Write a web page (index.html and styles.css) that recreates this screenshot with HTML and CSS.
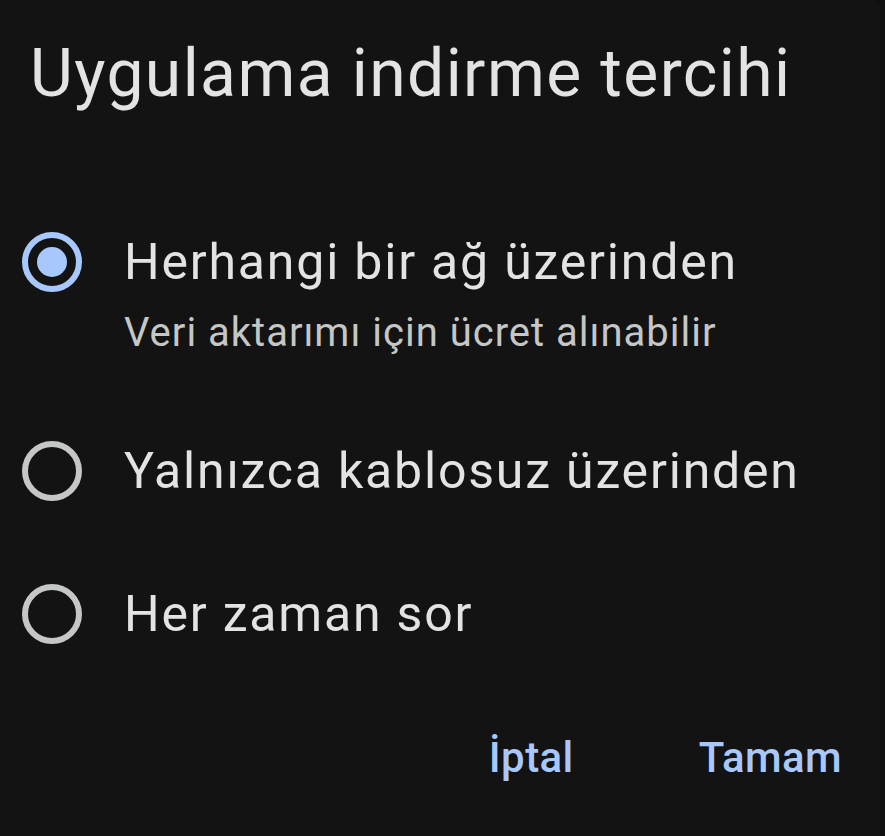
FILE: index.html
```html
<!DOCTYPE html>
<html lang="tr">
<head>
<meta charset="utf-8">
<link rel="stylesheet" href="styles.css">
</head>
<body>
<div class="dialog">
  <h1 class="title">Uygulama indirme tercihi</h1>
  <div class="options">
    <div class="option">
      <span class="radio selected"><span class="dot"></span></span>
      <div class="label">
        <div class="main">Herhangi bir ağ üzerinden</div>
        <div class="sub">Veri aktarımı için ücret alınabilir</div>
      </div>
    </div>
    <div class="option">
      <span class="radio"></span>
      <div class="label"><div class="main">Yalnızca kablosuz üzerinden</div></div>
    </div>
    <div class="option">
      <span class="radio"></span>
      <div class="label"><div class="main">Her zaman sor</div></div>
    </div>
  </div>
  <div class="actions">
    <span class="btn">İptal</span>
    <span class="btn">Tamam</span>
  </div>
</div>
</body>
</html>
```
FILE: styles.css
```css
html, body {
  margin: 0;
  padding: 0;
  background: #0f0f0f;
  height: 100%;
}
body {
  font-family: Roboto, "Noto Sans", sans-serif;
  color: #e3e3e3;
}
.dialog {
  width: 880px;
  height: 836px;
  box-sizing: border-box;
  background: #131313;
  border-top-right-radius: 8px;
  padding: 34px 0 0 0;
}
.title {
  margin: 0 0 0 30px;
  font-size: 66px;
  font-weight: 400;
  line-height: 80px;
  letter-spacing: 1.4px;
  color: #e3e3e3;
}
.options {
  margin-top: 118px;
  padding-left: 22px;
  display: flex;
  flex-direction: column;
  gap: 83px;
}
.option {
  display: flex;
  align-items: flex-start;
  gap: 42px;
}
.radio {
  width: 60px;
  height: 60px;
  box-sizing: border-box;
  border-radius: 50%;
  border: 6px solid #c4c7c5;
  display: flex;
  align-items: center;
  justify-content: center;
  flex: none;
}
.radio.selected {
  border-color: #a8c7fa;
}
.dot {
  width: 30px;
  height: 30px;
  border-radius: 50%;
  background: #a8c7fa;
}
.main {
  font-size: 50px;
  line-height: 60px;
  letter-spacing: 1.8px;
  color: #e3e3e3;
}
.sub {
  margin-top: 16px;
  font-size: 40px;
  line-height: 50px;
  letter-spacing: 1px;
  color: #c4c7c5;
}
.actions {
  margin-top: 89px;
  padding-right: 38px;
  display: flex;
  justify-content: flex-end;
  gap: 125px;
}
.btn {
  font-size: 42px;
  line-height: 50px;
  font-weight: 500;
  letter-spacing: 0.4px;
  color: #a8c7fa;
}
```
